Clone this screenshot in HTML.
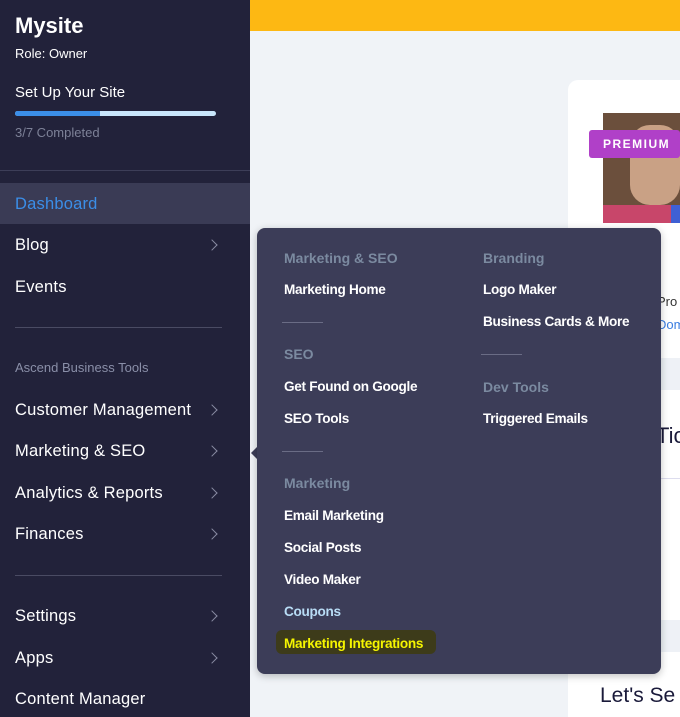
<!DOCTYPE html>
<html><head><meta charset="utf-8"><style>
*{margin:0;padding:0;box-sizing:border-box}
body{width:680px;height:717px;overflow:hidden;background:#f0f3f7;font-family:"Liberation Sans",sans-serif;position:relative}
.a{position:absolute;white-space:nowrap}
#sb{position:absolute;left:0;top:0;width:250px;height:717px;background:#22223a}
.si{position:absolute;left:15px;color:#fff;font-size:16.5px;line-height:20px;letter-spacing:.2px}
.ch{position:absolute;left:208px;width:8px;height:8px;border-right:1.5px solid #8a8ca3;border-top:1.5px solid #8a8ca3;transform:rotate(45deg)}
.hr{position:absolute;left:15px;width:207px;height:1px;background:#4a4b63}
#pop{position:absolute;left:257px;top:228px;width:404px;height:446px;background:#3c3d58;border-radius:8px;box-shadow:0 2px 8px rgba(0,0,0,.25)}
.ph{position:absolute;color:#7b8aa0;font-size:14px;font-weight:bold;line-height:18px}
.pi{position:absolute;color:#fff;font-size:13.6px;font-weight:bold;line-height:18px;letter-spacing:-.3px}
.pl{position:absolute;width:41px;height:1px;background:#6a6c85}
</style></head><body>
<div class="a" style="left:250px;top:0;width:430px;height:31px;background:#fdb813"></div>
<div class="a" style="left:568px;top:80px;width:112px;height:148px;background:#fff;border-radius:10px 0 0 0"></div>
<div class="a" style="left:603px;top:113px;width:77px;height:110px;background:#6b4f3c"></div>
<div class="a" style="left:630px;top:125px;width:50px;height:80px;background:#c9a185;border-radius:20px"></div>
<div class="a" style="left:603px;top:205px;width:68px;height:18px;background:#c8466a"></div>
<div class="a" style="left:671px;top:205px;width:9px;height:18px;background:#3f60d4"></div>
<div class="a" style="left:589px;top:130px;width:91px;height:28px;background:#b040c8;border-radius:3px;color:#fff;font-weight:bold;font-size:12px;letter-spacing:1.5px;line-height:28px;padding-left:14px">PREMIUM</div>
<div class="a" style="left:568px;top:228px;width:112px;height:130px;background:#fff"></div>
<div class="a" style="left:657px;top:294px;color:#333;font-size:13px">Pro</div>
<div class="a" style="left:657px;top:317px;color:#3b7de0;font-size:13px">Dom</div>
<div class="a" style="left:568px;top:358px;width:112px;height:32px;background:#eef1f6"></div>
<div class="a" style="left:568px;top:390px;width:112px;height:230px;background:#fff"></div>
<div class="a" style="left:656px;top:423px;color:#1a1a3a;font-size:22px">Tic</div>
<div class="a" style="left:568px;top:478px;width:112px;height:1px;background:#dde"></div>
<div class="a" style="left:568px;top:620px;width:112px;height:32px;background:#eef1f6"></div>
<div class="a" style="left:568px;top:652px;width:112px;height:65px;background:#fff"></div>
<div class="a" style="left:600px;top:684px;color:#1a1a3a;font-size:21px">Let's Se</div>

<div id="sb">
<div class="a" style="left:15px;top:13px;color:#fff;font-size:22px;font-weight:bold">Mysite</div>
<div class="a" style="left:15px;top:46px;color:#fff;font-size:13px">Role: Owner</div>
<div class="a" style="left:15px;top:84px;color:#fff;font-size:15px">Set Up Your Site</div>
<div class="a" style="left:15px;top:111px;width:201px;height:5px;background:#c9e6fb;border-radius:3px"></div>
<div class="a" style="left:15px;top:111px;width:85px;height:5px;background:#3b8ee8;border-radius:3px 0 0 3px"></div>
<div class="a" style="left:15px;top:125px;color:#7d8197;font-size:13px">3/7 Completed</div>
<div class="a" style="left:0;top:170px;width:250px;height:1px;background:#3d3e58"></div>
<div class="a" style="left:0;top:183px;width:250px;height:41px;background:#3a3b55"></div>
<div class="si" style="top:194px;color:#3b8ee8">Dashboard</div>
<div class="si" style="top:235px">Blog</div><div class="ch" style="top:241px"></div>
<div class="si" style="top:277px">Events</div>
<div class="hr" style="top:327px"></div>
<div class="a" style="left:15px;top:360px;color:#8a8fa8;font-size:13px">Ascend Business Tools</div>
<div class="si" style="top:400px">Customer Management</div><div class="ch" style="top:406px"></div>
<div class="si" style="top:441px">Marketing &amp; SEO</div><div class="ch" style="top:447px"></div>
<div class="si" style="top:483px">Analytics &amp; Reports</div><div class="ch" style="top:489px"></div>
<div class="si" style="top:524px">Finances</div><div class="ch" style="top:530px"></div>
<div class="hr" style="top:575px"></div>
<div class="si" style="top:606px">Settings</div><div class="ch" style="top:612px"></div>
<div class="si" style="top:648px">Apps</div><div class="ch" style="top:654px"></div>
<div class="si" style="top:689px">Content Manager</div>
</div>
<div class="a" style="left:251px;top:446px;width:0;height:0;border-top:7px solid transparent;border-bottom:7px solid transparent;border-right:7px solid #3c3d58"></div>
<div id="pop">
<div class="ph" style="left:27px;top:21px">Marketing &amp; SEO</div>
<div class="pi" style="left:27px;top:53px">Marketing Home</div>
<div class="pl" style="left:25px;top:94px"></div>
<div class="ph" style="left:27px;top:117px">SEO</div>
<div class="pi" style="left:27px;top:150px">Get Found on Google</div>
<div class="pi" style="left:27px;top:182px">SEO Tools</div>
<div class="pl" style="left:25px;top:223px"></div>
<div class="ph" style="left:27px;top:246px">Marketing</div>
<div class="pi" style="left:27px;top:279px">Email Marketing</div>
<div class="pi" style="left:27px;top:311px">Social Posts</div>
<div class="pi" style="left:27px;top:343px">Video Maker</div>
<div class="pi" style="left:27px;top:375px;color:#b8dcf5">Coupons</div>
<div class="a" style="left:19px;top:402px;width:160px;height:24px;background:#3d3b1a;border-radius:6px"></div>
<div class="pi" style="left:27px;top:407px;color:#f5f500">Marketing Integrations</div>
<div class="ph" style="left:226px;top:21px">Branding</div>
<div class="pi" style="left:226px;top:53px">Logo Maker</div>
<div class="pi" style="left:226px;top:85px">Business Cards &amp; More</div>
<div class="pl" style="left:224px;top:126px"></div>
<div class="ph" style="left:226px;top:150px">Dev Tools</div>
<div class="pi" style="left:226px;top:182px">Triggered Emails</div>
</div>
</body></html>
